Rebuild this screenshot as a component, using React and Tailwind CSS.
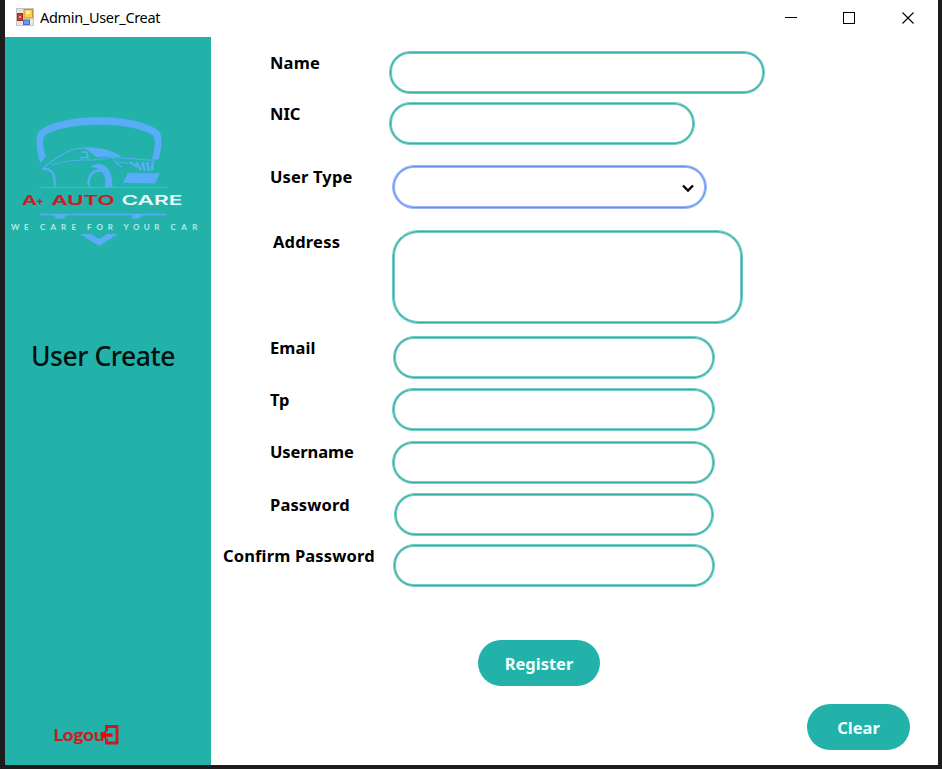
const TEAL_FIELD =
  "border-[#74cec7] shadow-[inset_0_0_0_1px_#36ada5,inset_0_0_0_2px_#74cec7]";
const BLUE_FIELD =
  "border-[#98b7fb] shadow-[inset_0_0_0_1px_#658ff0,inset_0_0_0_2px_#98b7fb]";

const rows = [
  { label: "Name", row: "mt-[14px]", pad: "w-[178px] pl-[59px]", text: "leading-[23px] tracking-[0.2px]", field: "h-[43px] w-[376px] rounded-[21px]" },
  { label: "NIC", row: "mt-2", pad: "w-[178px] pl-[59px]", text: "leading-[23px] tracking-[0px]", field: "h-[43px] w-[306px] rounded-[21px]" },
  { label: "User Type", row: "mt-5", pad: "w-[181px] pl-[59px]", text: "leading-[23px] tracking-[0.15px]", field: "h-[44px] w-[315px] rounded-[22px]", select: true },
  { label: "Address", row: "mt-[21px]", pad: "w-[181px] pl-[62px]", text: "leading-[23px] tracking-[0.2px]", field: "h-[94px] w-[351px] rounded-[26px]" },
  { label: "Email", row: "mt-3", pad: "w-[182px] pl-[59px]", text: "leading-[23px] tracking-[0.1px]", field: "h-[43px] w-[322px] rounded-[21px]" },
  { label: "Tp", row: "mt-[9px]", pad: "w-[181px] pl-[59px]", text: "leading-[23px] tracking-[0.3px]", field: "h-[43px] w-[323px] rounded-[21px]" },
  { label: "Username", row: "mt-[10px]", pad: "w-[181px] pl-[59px]", text: "leading-[21px] tracking-[-0.1px]", field: "h-[43px] w-[323px] rounded-[21px]" },
  { label: "Password", row: "mt-[9px]", pad: "w-[183px] pl-[59px]", text: "leading-[23px] tracking-[0.15px]", field: "h-[43px] w-[320px] rounded-[21px]" },
  { label: "Confirm Password", row: "mt-2", pad: "w-[182px] pl-[12px]", text: "leading-[23px] tracking-[0.15px]", field: "h-[43px] w-[322px] rounded-[21px]" },
];

function AppIcon() {
  return (
    <svg width="18" height="18" viewBox="0 0 18 18">
      <rect x="0.5" y="0.5" width="17" height="17" fill="#e9e9e9" stroke="#c3c3c3" />
      <rect x="1.5" y="5.5" width="5" height="7" fill="#cb3a30" stroke="#9e2d28" />
      <rect x="3" y="8" width="2" height="2" fill="#f3a194" />
      <rect x="8" y="1.5" width="8.5" height="8.5" fill="#f9d14f" stroke="#c4962b" />
      <rect x="10" y="3" width="4" height="3" fill="#fff0a4" />
      <rect x="7.5" y="12" width="6" height="4.5" fill="#6798ea" stroke="#416fc4" />
      <path d="M2 2.5h4M2 15h4" stroke="#d5d5d5" />
    </svg>
  );
}

function Logo() {
  return (
    <svg width="206" height="150" viewBox="0 0 206 150" fill="none">
      <path
        d="M35.5 58 C32 48 30 36 33 27.5 C41 18 68 12.3 94 12.3 C120 12.3 147 18 155 27.5 C158 36 156 46 153.5 54.5 L147 54.5 C149.5 46 151 37 148.5 31 C141 24.5 119 19.8 94 19.8 C69 19.8 47 24.5 39.5 31 C36.5 37 38.5 45 41 51.5 Z"
        fill="#59acf8"
      />
      <g stroke="#59acf8">
        <path d="M38 63 C44 58 48 55 55 51 C62 46 70 43 79 43 L91 43.5 C100 45 108 48 115 51" strokeWidth="1.2" />
        <path d="M47 60 C62 55 73 55 88 55 L114 51.5" strokeWidth="0.9" />
        <path d="M76 47 L82 47 L83 54 M75 53 L83 52" strokeWidth="1.6" />
        <path d="M104 52 L150 55.5 M108 52 L111 58 L117 62 M112 57 L124 58" strokeWidth="1.2" />
        <path d="M37 64.5 C46 62 51 69 49.5 81.5" strokeWidth="2.2" />
        <path d="M84 81.5 C82 71 88 65 96 65.5" strokeWidth="2.4" />
        <path d="M34 82.5 H163" strokeWidth="1.2" />
        <path d="M35 109.5 H161" strokeWidth="1.4" />
      </g>
      <path d="M80 43 C93 41 108 46 116 51.5 L91 52 Z" fill="#59acf8" />
      <path d="M85 62 C95 55 108 60 107.5 82 H100 C102 71 97 62 85 62 Z" fill="#59acf8" />
      <path d="M123 68.5 C132 69.5 145 69.5 155 69 L150 79.5 L118 79 Z" fill="#59acf8" transform="translate(0 -1)" />
      <path d="M125 57 L132 62 M131 57 L136 65 M137 57 L140 66 M142 57 L144 66 M148 57 L147 65" stroke="#59acf8" strokeWidth="2.7" />
      <path d="M49 110 H61 L59 113.5 H51 Z M128 110 H138 L134 113.5 H126 Z" fill="#59acf8" />
      <path d="M75 129 L86 129 L94 134 L102 129 L113 129 L94 141 Z" fill="#59acf8" />
      <g fontFamily="Inter, sans-serif" fontWeight="600" fontSize="13.5">
        <g fill="#c51f24" stroke="#c51f24" strokeWidth="0.2">
          <text x="17" y="100" textLength="15" lengthAdjust="spacingAndGlyphs">A</text>
          <text x="31" y="98.5" fontSize="10" textLength="8" lengthAdjust="spacingAndGlyphs">+</text>
          <text x="46.5" y="100" textLength="63" lengthAdjust="spacingAndGlyphs">AUTO</text>
        </g>
        <text x="116.5" y="100" fill="#e6fbf8" textLength="61" lengthAdjust="spacingAndGlyphs">CARE</text>
      </g>
      <g fill="#b5ece6" fontFamily="Lato, sans-serif" fontWeight="700" fontSize="8">
        <text x="6" y="125" textLength="17.5" lengthAdjust="spacing">WE</text>
        <text x="35" y="125" textLength="36" lengthAdjust="spacing">CARE</text>
        <text x="82" y="125" textLength="26" lengthAdjust="spacing">FOR</text>
        <text x="118.5" y="125" textLength="36" lengthAdjust="spacing">YOUR</text>
        <text x="165.5" y="125" textLength="27" lengthAdjust="spacing">CAR</text>
      </g>
    </svg>
  );
}

function Logout() {
  return (
    <svg width="70" height="28" viewBox="0 0 70 28">
      <text x="1.5" y="20" fill="#c91d20" stroke="#c91d20" strokeWidth="0.2" fontFamily="Lato, sans-serif" fontWeight="700" fontSize="17.5" textLength="51" lengthAdjust="spacingAndGlyphs">
        Logou
      </text>
      <path d="M54.5 10.5V5.5h10.5v16.5H54.5v-4.5" fill="none" stroke="#d0191c" strokeWidth="2.8" />
      <path d="M48 14.1 L54 9.3 V12.5 H60.5 V15.7 H54 V18.7 Z" fill="#f40505" />
    </svg>
  );
}

export default function App() {
  return (
    <div className="h-[769px] w-[942px] overflow-hidden bg-[#1c1c1c] pl-[5px] font-['Noto_Sans','Open_Sans',sans-serif]">
      <div className="flex h-[765px] w-[933px] flex-col bg-white">
        <header className="flex h-[37px] shrink-0 items-start">
          <div className="ml-[11px] mt-2">
            <AppIcon />
          </div>
          <h1 className="ml-[6px] mt-[7px] whitespace-nowrap text-[14.5px] leading-5 tracking-[-0.33px] text-black">Admin_User_Creat</h1>
          <svg className="ml-auto mr-[23px] mt-[11px]" width="130" height="14" viewBox="0 0 130 14" fill="none" stroke="#000">
            <path d="M0 6.5H12" />
            <rect x="58.5" y="1.5" width="11" height="11" />
            <path d="M117.5 1.5l11 11M128.5 1.5l-11 11" strokeWidth="1.1" />
          </svg>
        </header>
        <div className="flex min-h-0 flex-1">
          <aside className="flex w-[206px] shrink-0 flex-col bg-[#22b2aa]">
            <div className="mt-[68px]">
              <Logo />
            </div>
            <h2 className="ml-[26px] mt-[81px] whitespace-nowrap text-[26.5px] font-medium leading-10 tracking-[-0.45px] text-[#03100f]">User Create</h2>
            <button className="mb-[16px] ml-[47px] mt-auto w-[70px]">
              <Logout />
            </button>
          </aside>
          <main className="flex min-w-0 flex-1 flex-col">
            {rows.map((r) => (
              <div key={r.label} className={`flex items-start ${r.row}`}>
                <label className={`shrink-0 whitespace-nowrap text-[16.5px] font-bold text-black ${r.pad} ${r.text}`}>
                  {r.label}
                </label>
                <div className={`flex items-center justify-end border bg-white ${r.field} ${r.select ? BLUE_FIELD : TEAL_FIELD}`}>
                  {r.select && (
                    <svg className="mr-[12px] mt-[2px]" width="12" height="9" viewBox="0 0 12 9">
                      <path d="M1 1.5 L6 6.5 L11 1.5" fill="none" stroke="#000" strokeWidth="2.3" />
                    </svg>
                  )}
                </div>
              </div>
            ))}
            <button className="ml-[267px] mt-[53px] h-[46px] w-[122px] rounded-[23px] bg-[#22b2aa] pt-[2px] text-[16.5px] font-bold text-[#effffd]">
              Register
            </button>
            <button className="ml-[596px] mt-[18px] h-[46px] w-[103px] rounded-[23px] bg-[#22b2aa] pt-[2px] text-[16.5px] font-bold text-[#effffd]">
              Clear
            </button>
          </main>
        </div>
      </div>
    </div>
  );
}
